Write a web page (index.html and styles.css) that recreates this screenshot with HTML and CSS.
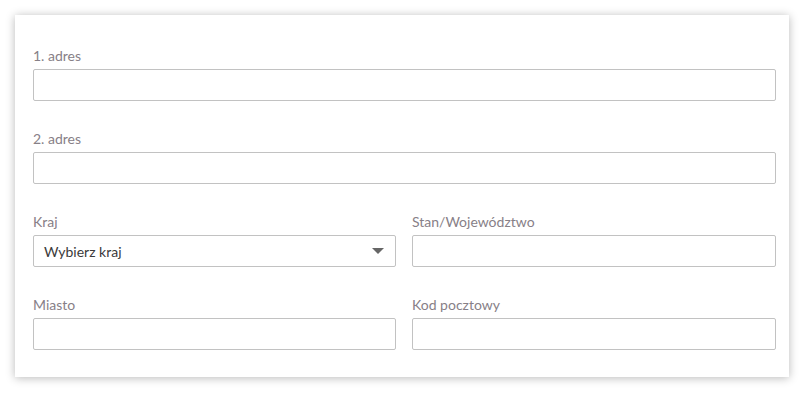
FILE: index.html
```html
<!DOCTYPE html>
<html lang="pl">
<head>
<meta charset="utf-8">
<link rel="stylesheet" href="styles.css">
</head>
<body>
<div class="card">
  <div class="group">
    <label class="label">1. adres</label>
    <div class="input"></div>
  </div>
  <div class="group">
    <label class="label">2. adres</label>
    <div class="input"></div>
  </div>
  <div class="row">
    <div class="group">
      <label class="label">Kraj</label>
      <div class="input select"><span>Wybierz kraj</span><span class="arrow"></span></div>
    </div>
    <div class="group">
      <label class="label">Stan/Województwo</label>
      <div class="input"></div>
    </div>
  </div>
  <div class="row last">
    <div class="group">
      <label class="label">Miasto</label>
      <div class="input"></div>
    </div>
    <div class="group">
      <label class="label">Kod pocztowy</label>
      <div class="input"></div>
    </div>
  </div>
</div>
</body>
</html>
```
FILE: styles.css
```css
html, body {
  margin: 0;
  padding: 0;
  background: #fff;
}
body {
  font-family: Lato, "Open Sans", sans-serif;
  font-size: 14px;
  padding: 15px 15px 16px 15px;
}
.card {
  width: 774px;
  box-sizing: border-box;
  padding: 31px 13px 27px 18px;
  background: #fff;
  box-shadow: 0 1px 9px rgba(0, 0, 0, 0.28);
}
.group {
  display: flex;
  flex-direction: column;
  margin-bottom: 28px;
}
.row {
  display: grid;
  grid-template-columns: 363px 364px;
  column-gap: 16px;
}
.row.last .group {
  margin-bottom: 0;
}
.label {
  height: 20px;
  line-height: 20px;
  margin-bottom: 3px;
  color: #878087;
  font-size: 14px;
}
.input {
  height: 32px;
  box-sizing: border-box;
  border: 1px solid #c2c2c2;
  border-radius: 2px;
  background: #fff;
}
.select {
  display: flex;
  align-items: center;
  justify-content: space-between;
  padding: 0 11px 0 10px;
  color: #3a3a3a;
  font-size: 14px;
}
.arrow {
  width: 0;
  height: 0;
  border-left: 6px solid transparent;
  border-right: 6px solid transparent;
  border-top: 6px solid #666;
}
```
